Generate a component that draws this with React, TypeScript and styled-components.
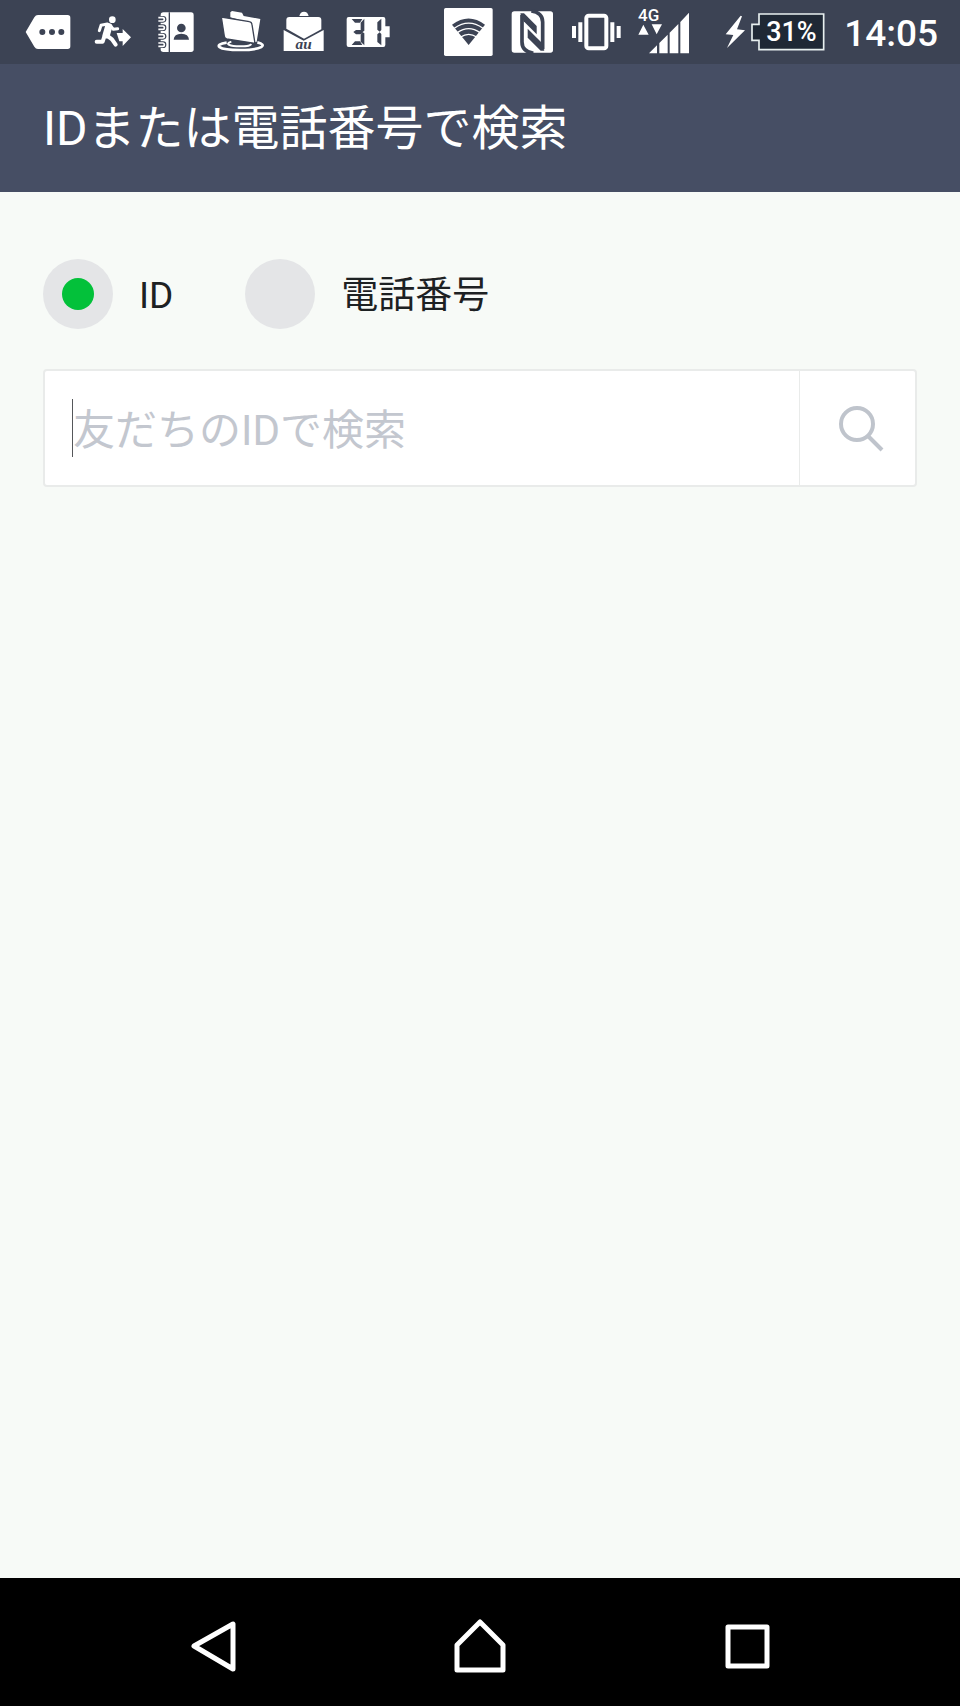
import React, { useState } from "react";
import styled, { createGlobalStyle } from "styled-components";

const GlobalStyle = createGlobalStyle`
  *, *::before, *::after { box-sizing: border-box; }
  body {
    margin: 0;
    background: #f7faf7;
    font-family: Roboto, "Noto Sans CJK JP", sans-serif;
  }
`;

const Screen = styled.div`
  display: flex;
  flex-direction: column;
  min-height: 100vh;
`;

const StatusBar = styled.div`
  display: flex;
  align-items: center;
  height: 64px;
  padding: 0 22px 0 16px;
  background: #3c4354;
  color: #fff;
`;

const StatusGroup = styled.div<{ $push?: boolean; $gap?: number }>`
  display: flex;
  align-items: center;
  margin-left: ${(p) => (p.$push ? "auto" : "0")};
  padding-left: ${(p) => p.$gap ?? 0}px;
`;

const StatusIcon = styled.svg<{ $width?: number }>`
  display: block;
  flex: none;
  width: ${(p) => p.$width ?? 64}px;
  height: 64px;
  fill: #fff;
`;

const Battery = styled.div`
  display: grid;
  align-items: center;
  margin-right: 19px;

  > * {
    grid-area: 1 / 1;
  }
`;

const BatteryLevel = styled.span`
  padding-left: 15px;
  font-size: 27px;
  font-weight: 500;
  line-height: 32px;
`;

const Clock = styled.time`
  padding-top: 4px;
  font-size: 37px;
  font-weight: 500;
  line-height: 44px;
`;

const TitleBar = styled.header`
  display: flex;
  align-items: center;
  height: 128px;
  padding: 2px 43px 0;
  background: #464e64;
`;

const Title = styled.h1`
  margin: 0;
  color: #fff;
  font-size: 48px;
  font-weight: 400;
  line-height: 64px;
`;

const Content = styled.main`
  display: flex;
  flex: 1;
  flex-direction: column;
  gap: 40px;
  padding: 67px 43px;
`;

const Choices = styled.div`
  display: flex;
  gap: 72px;
`;

const Choice = styled.label`
  display: flex;
  align-items: center;
  gap: 26px;
  color: #1d2123;
  font-size: 37px;
  line-height: 48px;
`;

const ChoiceText = styled.span`
  padding-top: 4px;
`;

const Radio = styled.input`
  display: grid;
  place-items: center;
  appearance: none;
  width: 70px;
  height: 70px;
  margin: 0;
  border-radius: 50%;
  background: #e4e5e7;

  &:checked::before {
    content: "";
    width: 32px;
    height: 32px;
    border-radius: 50%;
    background: #03c13a;
  }
`;

const SearchBox = styled.form`
  display: flex;
  height: 118px;
  border: 2px solid #e9ebea;
  border-radius: 4px;
  background: #fff;
`;

const Field = styled.div`
  display: flex;
  flex: 1;
  align-items: center;
  min-width: 0;
  padding-left: 27px;
`;

const Caret = styled.span`
  width: 1px;
  height: 58px;
  background: #55575a;
`;

const SearchInput = styled.input`
  flex: 1;
  min-width: 0;
  height: 68px;
  padding: 4px 0 0;
  border: 0;
  outline: 0;
  background: transparent;
  color: #1d2123;
  font: 400 42px/64px Roboto, "Noto Sans CJK JP", sans-serif;

  &::placeholder {
    color: #c3c7cf;
    opacity: 1;
  }
`;

const SearchButton = styled.button`
  display: grid;
  place-items: center;
  width: 116px;
  padding: 2px 0 0 6px;
  border: 0;
  border-left: 1px solid #e9ebea;
  background: transparent;
`;

const SearchIcon = styled.svg`
  width: 46px;
  height: 46px;
  fill: none;
  stroke: #bfc4cc;
  stroke-width: 4;
`;

const NavBar = styled.nav`
  display: flex;
  justify-content: center;
  height: 128px;
  background: #000;
`;

const NavButton = styled.button`
  display: grid;
  place-items: center;
  width: 267px;
  padding: 10px 0 0;
  border: 0;
  background: transparent;
`;

const NavIcon = styled.svg`
  width: 64px;
  height: 64px;
  fill: none;
  stroke: #fff;
  stroke-width: 5;
  stroke-linejoin: round;
`;

const DARK = "#3c4354";

const MoreIcon = () => (
  <StatusIcon viewBox="48 0 192 192">
    <path d="M77 96 103 52Q107 45 114 45H203Q211 45 211 53V139Q211 147 203 147H114Q107 147 103 140Z" />
    <g fill={DARK}>
      <circle cx="127" cy="96" r="9" />
      <circle cx="156" cy="96" r="9" />
      <circle cx="184" cy="96" r="9" />
    </g>
  </StatusIcon>
);

const RunnerIcon = () => (
  <StatusIcon viewBox="240 0 192 192">
    <circle cx="337" cy="59" r="10" />
    <g fill="none" stroke="#fff" strokeLinecap="round" strokeLinejoin="round">
      <path d="M326 80 319 104" strokeWidth="22" />
      <path d="M322 72 303 76 298 92M330 76 340 88 353 86" strokeWidth="9" />
      <path d="M314 106 308 125H290M320 106 336 118 347 134" strokeWidth="12" />
    </g>
    <path d="M350 99H368V87L393 112 368 138V124H358Z" />
  </StatusIcon>
);

const ContactsIcon = () => (
  <StatusIcon viewBox="432 0 192 192">
    <rect x="482" y="37" width="99" height="119" rx="8" />
    <path d="M508 37V156" stroke={DARK} strokeWidth="4" />
    {[58, 83, 109, 134].map((y) => (
      <g key={y}>
        <rect x="472" y={y - 10} width="27" height="20" rx="10" fill={DARK} />
        <path
          d={`M475 ${y - 5}H488Q493 ${y - 5} 493 ${y}T488 ${y + 5}H475`}
          fill="none"
          stroke="#fff"
          strokeWidth="5"
        />
      </g>
    ))}
    <g fill={DARK}>
      <circle cx="544" cy="84" r="13" />
      <path d="M521 119Q522 101 544 101T567 119Z" />
    </g>
  </StatusIcon>
);

const FolderIcon = () => (
  <StatusIcon viewBox="24 0 192 192">
    <g fill="none" stroke="#fff">
      <path d="M80 128C38 134 52 150 120 150S204 134 172 127" strokeWidth="8" />
      <path d="M94 125C72 132 90 139 120 139S150 136 154 132" strokeWidth="6" />
    </g>
    <path d="M91 52V37L96 33 126 38 131 48 181 57 170 125 160 128 152 70Z" />
    <path
      d="M64 51 148 65Q155 66 156 74L165 130 80 117Q74 115 73 109Z"
      stroke={DARK}
      strokeWidth="4"
    />
  </StatusIcon>
);

const MailIcon = () => (
  <StatusIcon viewBox="216 0 192 192">
    <path d="M298 48Q301 35 312 35T326 48Z" />
    <path d="M259 60Q259 51 268 51H355Q364 51 364 60V88L312 116 259 86Z" />
    <path d="M251 90 311 122 371 90V153H251Z" />
    <text
      x="311"
      y="146"
      textAnchor="middle"
      fill={DARK}
      fontFamily="Liberation Serif, serif"
      fontSize="46"
      fontStyle="italic"
      fontWeight="700"
    >
      au
    </text>
  </StatusIcon>
);

const BatteryBadgeIcon = () => (
  <StatusIcon viewBox="408 0 192 192">
    <path d="M446 51H550Q556 51 556 57V79H569V112H556V135Q556 141 550 141H446Q440 141 440 135V57Q440 51 446 51Z" />
    <g fill={DARK}>
      <path d="M455 57H487L480 68H465ZM460 96 468 90H482L490 96 482 103H468ZM455 135H487L480 124H465ZM482 68 493 56V92L488 96 482 89ZM482 125 493 136V100L488 97 482 104ZM532 67 544 56V90L539 95 532 89ZM532 126 544 136V102L539 97 532 103Z" />
    </g>
  </StatusIcon>
);

const WifiIcon = () => (
  <StatusIcon viewBox="51 0 192 192">
    <rect x="72" y="24" width="146" height="144" rx="5" />
    <path d="M146 135 96 74Q146 37 195 74Z" fill={DARK} />
    <g fill="none" stroke="#fff" strokeWidth="4">
      <path d="M103 85Q146 54 189 85" />
      <path d="M112 98Q146 74 180 98" />
      <path d="M122 111Q146 95 170 111" />
    </g>
  </StatusIcon>
);

const NfcIcon = () => (
  <StatusIcon viewBox="243 0 192 192">
    <rect x="275" y="34" width="124" height="124" rx="8" />
    <g fill="none" stroke={DARK} strokeWidth="11">
      <path d="M340 160Q306 154 306 126V44" />
      <path d="M334 33Q368 38 368 66V148" />
    </g>
    <g fill={DARK}>
      <path d="M301 40H312L350 78V103L311 64Z" />
      <path d="M373 152H362L323 113V86L363 126Z" />
    </g>
  </StatusIcon>
);

const VibrateIcon = () => (
  <StatusIcon viewBox="435 0 192 192">
    <rect x="499" y="47" width="60" height="98" rx="7" fill="none" stroke="#fff" strokeWidth="12" />
    <path d="M456 78H468V114H456ZM475 67H487V126H475ZM571 67H583V126H571ZM590 78H602V114H590Z" />
  </StatusIcon>
);

const SignalIcon = () => (
  <StatusIcon viewBox="627 0 192 192">
    <text x="654" y="62" fontFamily="Roboto, sans-serif" fontSize="51" fontWeight="500">
      4G
    </text>
    <path d="M655 104 670 74 686 104ZM695 73H726L710 103Z" />
    <path d="M687 160 711 136V160ZM718 129 743 104V160H718ZM749 98 775 72V160H749ZM781 66 807 38V160H781Z" />
  </StatusIcon>
);

const BoltIcon = () => (
  <StatusIcon $width={32} viewBox="57 0 96 192">
    <path d="M122 47 77 103 100 105 81 144 135 91 111 88 126 49Z" />
  </StatusIcon>
);

export default function App() {
  const [mode, setMode] = useState<"id" | "phone">("id");
  const [query, setQuery] = useState("");

  return (
    <Screen>
      <GlobalStyle />
      <StatusBar>
        <StatusGroup>
          <MoreIcon />
          <RunnerIcon />
          <ContactsIcon />
          <FolderIcon />
          <MailIcon />
          <BatteryBadgeIcon />
        </StatusGroup>
        <StatusGroup $push>
          <WifiIcon />
          <NfcIcon />
          <VibrateIcon />
          <SignalIcon />
        </StatusGroup>
        <StatusGroup $gap={26}>
          <BoltIcon />
          <Battery>
            <StatusIcon $width={74} viewBox="156 0 222 192">
              <path
                d="M180 42H374V149H180V121H159V73H180Z"
                fill="#1f2835"
                stroke="#e8f0f0"
                strokeWidth="5"
              />
            </StatusIcon>
            <BatteryLevel>31%</BatteryLevel>
          </Battery>
          <Clock>14:05</Clock>
        </StatusGroup>
      </StatusBar>

      <TitleBar>
        <Title>IDまたは電話番号で検索</Title>
      </TitleBar>

      <Content>
        <Choices role="radiogroup" aria-label="検索方法">
          <Choice>
            <Radio type="radio" name="mode" checked={mode === "id"} onChange={() => setMode("id")} />
            <ChoiceText>ID</ChoiceText>
          </Choice>
          <Choice>
            <Radio type="radio" name="mode" checked={mode === "phone"} onChange={() => setMode("phone")} />
            <ChoiceText>電話番号</ChoiceText>
          </Choice>
        </Choices>
        <SearchBox onSubmit={(e) => e.preventDefault()}>
          <Field>
            <Caret />
            <SearchInput
              aria-label="友だちのIDで検索"
              placeholder="友だちのIDで検索"
              value={query}
              onChange={(e) => setQuery(e.target.value)}
            />
          </Field>
          <SearchButton type="submit" aria-label="検索">
            <SearchIcon viewBox="0 0 46 46">
              <circle cx="19" cy="18" r="16" />
              <path d="M30 30 44 44" />
            </SearchIcon>
          </SearchButton>
        </SearchBox>
      </Content>

      <NavBar>
        <NavButton type="button" aria-label="戻る">
          <NavIcon viewBox="0 0 64 64">
            <path d="M52 9V54L13 31Z" />
          </NavIcon>
        </NavButton>
        <NavButton type="button" aria-label="ホーム">
          <NavIcon viewBox="0 0 64 64">
            <path d="M32 7 55 30V55H9V30Z" />
          </NavIcon>
        </NavButton>
        <NavButton type="button" aria-label="履歴">
          <NavIcon viewBox="0 0 64 64">
            <path d="M13 12H52V51H13Z" />
          </NavIcon>
        </NavButton>
      </NavBar>
    </Screen>
  );
}
